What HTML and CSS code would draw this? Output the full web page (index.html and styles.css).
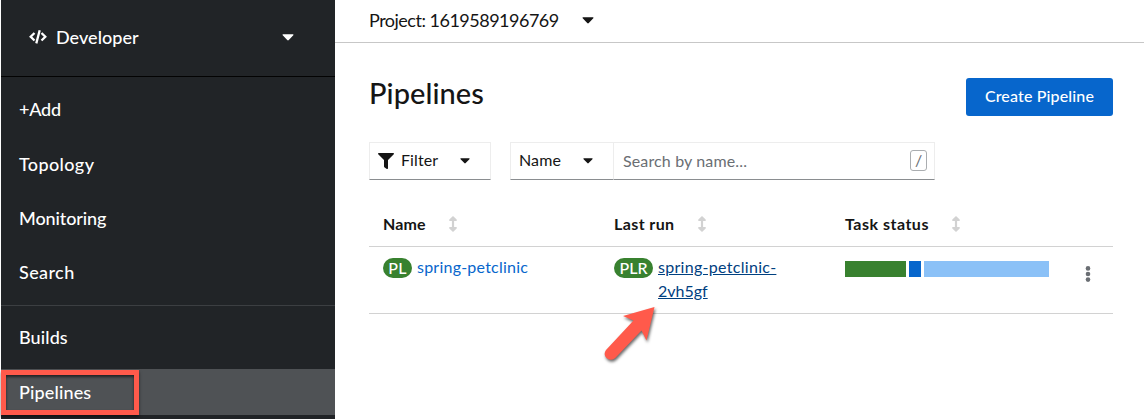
FILE: index.html
```html
<!DOCTYPE html>
<html lang="en">
<head>
<meta charset="utf-8">
<title>Pipelines</title>
<link rel="stylesheet" href="styles.css">
</head>
<body>
<div class="app">
  <nav class="sidebar">
    <div class="perspective">
      <svg class="code-icon" viewBox="0 0 18 16" fill="none" stroke="currentColor" stroke-width="2.3"><path d="M5.5 4 1.7 7.8 5.5 11.5M12.5 4l3.8 3.8-3.8 3.7M10.7 1.2 7.3 14.4"/></svg>
      <span class="t-developer">Developer</span>
      <svg class="caret" viewBox="0 0 12 7"><path d="M1 .3h10q1 .3.3 1L6.8 6q-.8.8-1.6 0L.7 1.3Q0 .6 1 .3z"/></svg>
    </div>
    <div class="group">
      <a class="item t-add">+Add</a>
      <a class="item t-topology">Topology</a>
      <a class="item t-monitoring">Monitoring</a>
      <a class="item t-search">Search</a>
    </div>
    <div class="group group-second">
      <a class="item t-builds">Builds</a>
      <a class="item current t-pipelines">Pipelines</a>
    </div>
  </nav>
  <main class="main">
    <div class="project-bar">
      <span class="t-project">Project: 1619589196769</span>
      <svg class="caret" viewBox="0 0 12 7"><path d="M1 .3h10q1 .3.3 1L6.8 6q-.8.8-1.6 0L.7 1.3Q0 .6 1 .3z"/></svg>
    </div>
    <div class="content">
      <header class="heading">
        <h1>Pipelines</h1>
        <button class="create">Create Pipeline</button>
      </header>
      <div class="toolbar">
        <div class="control filter">
          <svg class="funnel" viewBox="0 0 512 512"><path d="M488 0H24C3 0-8 26 7 41l185 185v206c0 8 4 15 10 20l80 56c16 11 38 0 38-20V226L505 41c15-15 4-41-17-41z"/></svg>
          <span class="t-filter">Filter</span>
          <svg class="caret small" viewBox="0 0 12 7"><path d="M1 .3h10q1 .3.3 1L6.8 6q-.8.8-1.6 0L.7 1.3Q0 .6 1 .3z"/></svg>
        </div>
        <div class="control kind">
          <span class="t-kind">Name</span>
          <svg class="caret small" viewBox="0 0 12 7"><path d="M1 .3h10q1 .3.3 1L6.8 6q-.8.8-1.6 0L.7 1.3Q0 .6 1 .3z"/></svg>
        </div>
        <div class="control search">
          <span class="t-placeholder">Search by name...</span>
          <kbd>/</kbd>
        </div>
      </div>
      <div class="table">
        <div class="row head">
          <div class="cell"><span class="t-name">Name</span><svg class="sort" viewBox="0 0 8 16"><path d="M4 0 7.7 3.5V5H5.1v6h2.6v1.5L4 16 .3 12.5V11h2.6V5H.3V3.5z"/></svg></div>
          <div class="cell"><span class="t-lastrun">Last run</span><svg class="sort" viewBox="0 0 8 16"><path d="M4 0 7.7 3.5V5H5.1v6h2.6v1.5L4 16 .3 12.5V11h2.6V5H.3V3.5z"/></svg></div>
          <div class="cell"><span class="t-status">Task status</span><svg class="sort" viewBox="0 0 8 16"><path d="M4 0 7.7 3.5V5H5.1v6h2.6v1.5L4 16 .3 12.5V11h2.6V5H.3V3.5z"/></svg></div>
          <div class="cell"></div>
        </div>
        <div class="row body">
          <div class="cell"><span class="badge pl">PL</span><a class="link">spring-petclinic</a></div>
          <div class="cell"><span class="badge plr">PLR</span><a class="link hovered">spring-petclinic-<br><span class="t-suffix">2vh5gf</span></a></div>
          <div class="cell"><div class="bar"><i class="done"></i><i class="running"></i><i class="pending"></i></div></div>
          <div class="cell"><svg class="kebab" viewBox="0 0 6 16"><circle cx="3" cy="2.4" r="2.3"/><circle cx="3" cy="8" r="2.3"/><circle cx="3" cy="13.6" r="2.3"/></svg></div>
        </div>
      </div>
    </div>
  </main>
  <div class="highlight"></div>
  <svg class="arrow" viewBox="0 0 60 64"><path d="M54.5 7 46.5 40.5 41.5 30.5 15 58.3Q10 61.5 6.5 58 3 54.5 6 50L33.5 20.5 23 16z"/></svg>
</div>
</body>
</html>
```
FILE: styles.css
```css
* { box-sizing: border-box; }
body { margin: 0; background: #fff; color: #151515; font: 16px/24px Lato, "Open Sans", sans-serif; }
.app { position: relative; display: flex; width: 1144px; height: 419px; overflow: hidden; }
svg { fill: currentColor; flex: none; }
span, a { white-space: nowrap; }

.sidebar { width: 335px; flex: none; border-left: 1px solid #fff; background: #212427; color: #fff; font-size: 18px; font-weight: 500; }
.perspective { display: flex; align-items: center; height: 77px; padding: 0 41px 2px 28px; border-bottom: 1px solid #030303; }
.code-icon { width: 18px; height: 16px; margin-right: 9px; fill: none; }
.caret { width: 12px; height: 7px; }
.caret.small { width: 10px; height: 6px; }
.perspective .caret { margin-left: auto; }
.group { padding-top: 5px; }
.item { display: flex; align-items: center; height: 54.4px; padding-left: 18px; }
.group-second { margin-top: 5.4px; padding-top: 4px; border-top: 1px solid #3c3f42; height: 130px; }
.group-second .item { height: 54px; }
.group-second .item + .item { margin-top: 5px; }
.group-second .item.current { height: 46px; background: #4f5255; }
.t-developer { letter-spacing: .05px; }
.t-add { letter-spacing: -.25px; }
.t-topology { letter-spacing: .38px; }
.t-monitoring { letter-spacing: -.1px; }
.t-search { letter-spacing: .4px; }
.t-builds { letter-spacing: .1px; }
.t-pipelines { letter-spacing: .15px; }

.main { flex: 1; }
.project-bar { display: flex; align-items: center; height: 43px; padding: 0 0 2px 34px; border-bottom: 1px solid #c7c7c7; font-size: 18px; }
.t-project { letter-spacing: -.5px; }
.project-bar .caret { margin-left: 23px; }
.content { padding: 35px 31px 0 34px; }
.heading { display: flex; justify-content: space-between; height: 38px; }
h1 { margin: -3px 0 0; font-size: 29px; line-height: 36px; font-weight: 500; letter-spacing: .05px; }
.create { width: 147px; height: 38px; padding: 0 0 2px; border: 0; border-radius: 3px; background: #0766cc; color: #fff; font: 500 16px/24px Lato, sans-serif; letter-spacing: .15px; }
.toolbar { display: flex; margin-top: 26px; height: 38px; }
.control { display: flex; align-items: center; border: 1px solid #ededed; border-bottom-color: #8a8d90; }
.filter { width: 122px; padding-left: 8px; margin-right: 19px; }
.t-filter { margin-top: -2px; letter-spacing: .1px; }
.funnel { width: 16px; height: 16px; margin-right: 7px; }
.filter .caret { margin-left: auto; margin-right: 20px; }
.kind { width: 103px; padding-left: 8px; border-right: 0; }
.t-kind { margin-top: -2px; letter-spacing: .1px; }
.kind .caret { margin-left: auto; margin-right: 20px; }
.search { width: 322px; padding: 0 7px 0 8px; justify-content: space-between; color: #6a6e73; }
.t-placeholder { padding-left: 1px; letter-spacing: .14px; }
kbd { width: 17px; height: 21px; margin-top: -2px; border: 1px solid #aaadb0; border-radius: 3px; font: 16px/18px Lato, sans-serif; text-align: center; }

.row { display: grid; grid-template-columns: 231px 231px 232px 50px; border-bottom: 1px solid #d2d2d2; }
.row .cell { display: flex; padding-left: 14px; }
.head { height: 67px; font-weight: 700; font-size: 16px; }
.head .cell { padding-top: 32px; }
.sort { width: 8px; height: 16px; margin: 4px 0 0 auto; color: #d2d2d2; }
.head .cell:nth-child(1) .sort { margin-right: 143px; }
.head .cell:nth-child(2) .sort { margin-right: 125px; }
.head .cell:nth-child(3) .sort { margin-right: 103px; }
.t-name { letter-spacing: .15px; }
.t-lastrun { letter-spacing: .4px; }
.t-status { letter-spacing: .5px; }
.body { height: 67px; }
.body .cell { padding-top: 8px; }
.badge { height: 20px; margin: 3px 5px 0 0; border-radius: 10px; background: #38812f; color: #fff; font-weight: 500; line-height: 19px; text-align: center; }
.pl { width: 29px; letter-spacing: .3px; }
.plr { width: 39px; }
.link { color: #0766cc; letter-spacing: .23px; }
.hovered { color: #004080; text-decoration: underline; letter-spacing: .3px; }
.t-suffix { letter-spacing: 0; }
.bar { display: flex; gap: 3px; height: 16px; margin-top: 6px; }
.bar i { display: block; }
.done { width: 61px; background: #38812f; }
.running { width: 12px; background: #0766cc; }
.pending { width: 125px; background: #8bc1f7; }
.kebab { width: 6px; height: 16px; margin: 11px 0 0 8px; color: #6a6e73; }

.highlight { position: absolute; left: 1px; top: 370px; width: 138px; height: 45px; border: 5px solid #ff5a4b; box-shadow: 0 2px 3px #0008, inset 0 2px 3px #0009; }
.arrow { position: absolute; left: 600px; top: 300px; width: 60px; height: 64px; color: #ff5a4b; filter: drop-shadow(1px 2px 1.5px #0009); }
```
